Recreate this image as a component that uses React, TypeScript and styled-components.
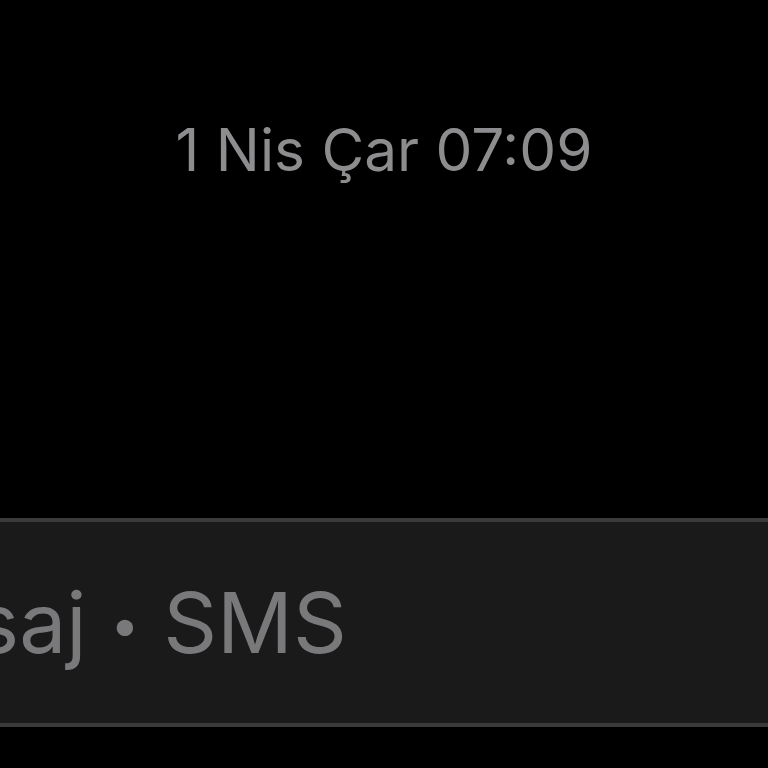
import styled, { createGlobalStyle } from 'styled-components'

const GlobalStyle = createGlobalStyle`
  html, body {
    margin: 0;
    padding: 0;
    background: #000;
  }
  * {
    box-sizing: border-box;
  }
`

export default function App() {
  return (
    <>
      <GlobalStyle />
      <StyledPage>
        <StyledTimestamp>1 Nis Çar 07:09</StyledTimestamp>
        <StyledComposer>
          <StyledPlaceholder>
            Mesaj <StyledSeparator>•</StyledSeparator> SMS
          </StyledPlaceholder>
        </StyledComposer>
      </StyledPage>
    </>
  )
}

const StyledPage = styled.main`
  display: flex;
  flex-direction: column;
  width: 100%;
  height: 768px;
  overflow: hidden;
  background: #000;
  font-family: Inter, 'Liberation Sans', sans-serif;
`

const StyledTimestamp = styled.div`
  margin-top: 112px;
  text-align: center;
  font-size: 58.5px;
  font-weight: 400;
  line-height: 76px;
  color: #8d8d8f;
`

const StyledComposer = styled.div`
  display: flex;
  align-items: center;
  margin-top: 330px;
  height: 209px;
  overflow: hidden;
  background: #1a1a1a;
  border-top: 4px solid #3a3a3a;
  border-bottom: 4px solid #3a3a3a;
`

const StyledPlaceholder = styled.span`
  flex-shrink: 0;
  margin-left: -150px;
  font-size: 84px;
  line-height: 1;
  white-space: nowrap;
  color: #79797b;
`

const StyledSeparator = styled.span`
  display: inline-block;
  font-size: 52px;
  vertical-align: 0.18em;
`
